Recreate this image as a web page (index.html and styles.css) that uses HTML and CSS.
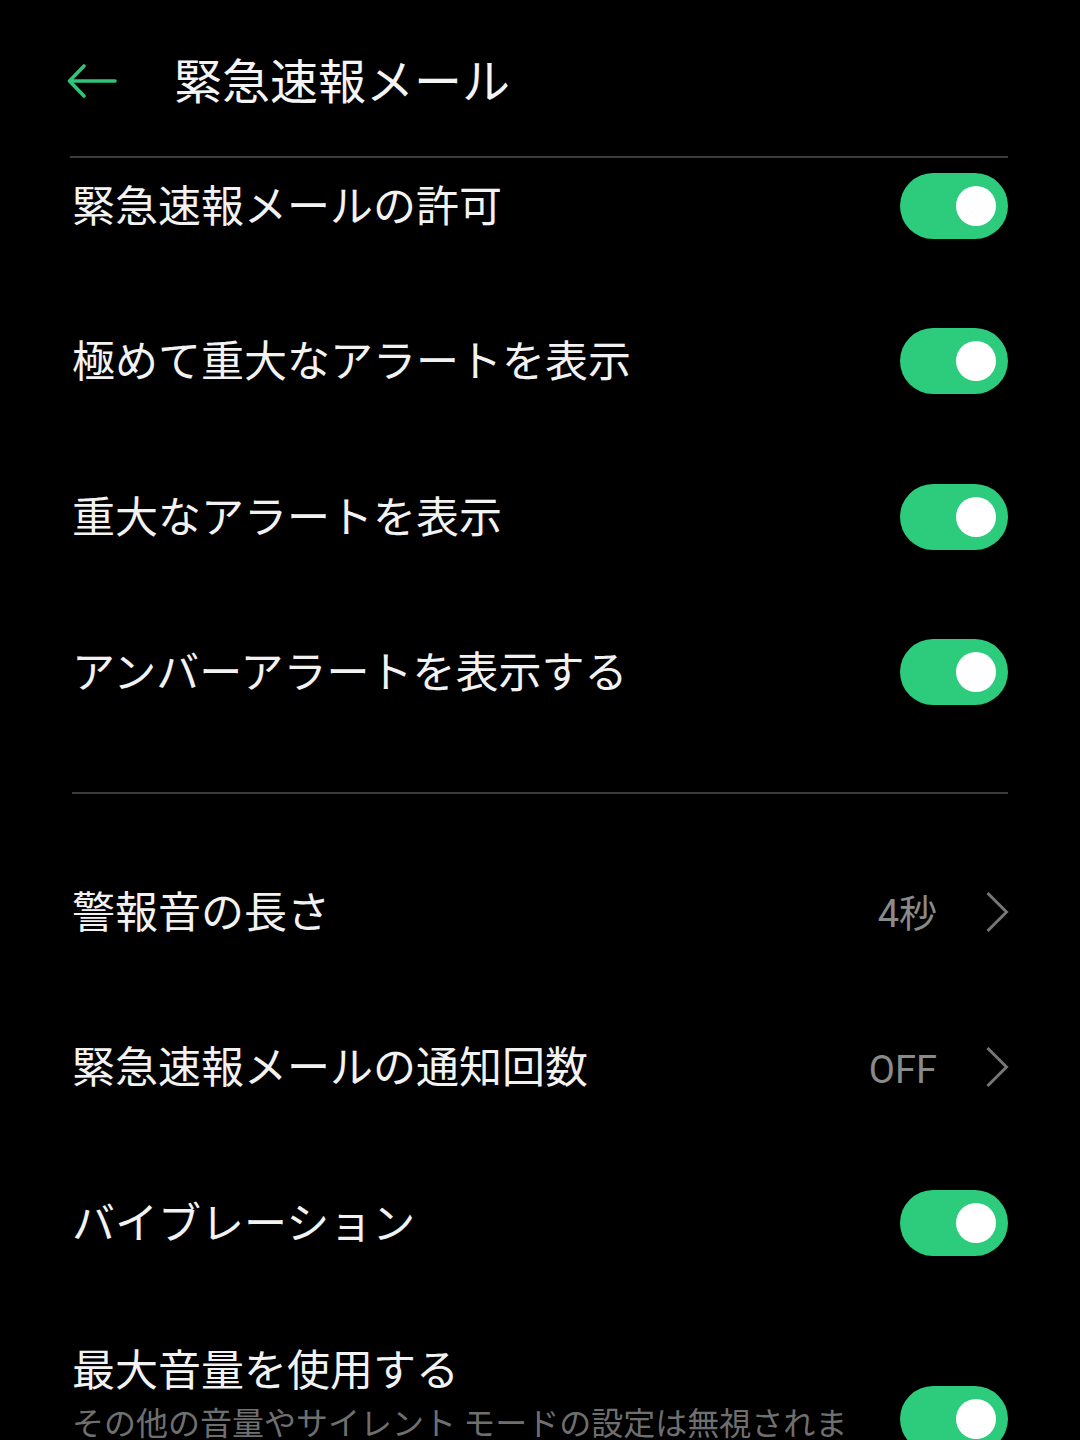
FILE: index.html
```html
<!DOCTYPE html>
<html lang="ja">
<head>
<meta charset="utf-8">
<link rel="stylesheet" href="styles.css">
</head>
<body>
<div class="screen">
  <header class="appbar">
    <svg class="back" width="52" height="40" viewBox="0 0 52 40" aria-hidden="true">
      <path d="M49 20 H4 M18 5 L3.5 20 L18 35" fill="none" stroke="#2fc479" stroke-width="3.6" stroke-linecap="round" stroke-linejoin="round"/>
    </svg>
    <h1 class="title">緊急速報メール</h1>
  </header>
  <div class="divider first"></div>
  <div class="viewport">
    <div class="list">
      <section class="group">
        <div class="row"><span class="label">緊急速報メールの許可</span><span class="toggle"><span class="knob"></span></span></div>
        <div class="row"><span class="label">極めて重大なアラートを表示</span><span class="toggle"><span class="knob"></span></span></div>
        <div class="row"><span class="label">重大なアラートを表示</span><span class="toggle"><span class="knob"></span></span></div>
        <div class="row"><span class="label">アンバーアラートを表示する</span><span class="toggle"><span class="knob"></span></span></div>
      </section>
      <div class="divider"></div>
      <section class="group second">
        <div class="row"><span class="label">警報音の長さ</span><span class="value">4秒</span><svg class="chev" width="24" height="42" viewBox="0 0 24 42" aria-hidden="true"><path d="M2.5 2 L21.5 21 L2.5 40" fill="none" stroke="#767676" stroke-width="3"/></svg></div>
        <div class="row"><span class="label">緊急速報メールの通知回数</span><span class="value">OFF</span><svg class="chev" width="24" height="42" viewBox="0 0 24 42" aria-hidden="true"><path d="M2.5 2 L21.5 21 L2.5 40" fill="none" stroke="#767676" stroke-width="3"/></svg></div>
        <div class="row"><span class="label">バイブレーション</span><span class="toggle"><span class="knob"></span></span></div>
        <div class="row tall">
          <div class="textblock">
            <div class="label">最大音量を使用する</div>
            <div class="sub">その他の音量やサイレント モードの設定は無視されます。</div>
          </div>
          <span class="toggle"><span class="knob"></span></span>
        </div>
      </section>
    </div>
  </div>
</div>
</body>
</html>
```

FILE: styles.css
```css
html, body {
  margin: 0;
  padding: 0;
  background: #000;
}
body {
  width: 1080px;
  height: 1440px;
  overflow: hidden;
  font-family: "Noto Sans CJK JP", "Noto Sans", sans-serif;
  color: #f2f2f2;
}
.screen {
  display: flex;
  flex-direction: column;
  height: 1440px;
}
.appbar {
  height: 156px;
  display: flex;
  align-items: center;
  padding-left: 66px;
  box-sizing: border-box;
  flex: none;
}
.back {
  display: block;
  margin-top: 6px;
}
.title {
  margin: 0 0 0 56px;
  font-size: 48px;
  font-weight: 400;
  line-height: 1;
  letter-spacing: 0;
  color: #f4f4f4;
}
.divider {
  height: 2px;
  background: #3c3c3c;
  margin: 0 72px 0 72px;
  flex: none;
}
.divider.first {
  margin-left: 70px;
}
.viewport {
  flex: 1;
  overflow: hidden;
}
.list {
  margin-top: -30px;
}
.group {
  padding: 0 72px 0 72px;
}
.group:first-child {
  padding-bottom: 42px;
}
.group.second {
  padding-top: 40px;
}
.row {
  height: 155.5px;
  display: flex;
  align-items: center;
}
.label {
  flex: 1;
  font-size: 43px;
  line-height: 56px;
  font-weight: 400;
  white-space: nowrap;
  padding-bottom: 6px;
}
.toggle {
  flex: none;
  width: 108px;
  height: 66px;
  border-radius: 33px;
  background: #2dcb7c;
  display: flex;
  align-items: center;
  justify-content: flex-end;
  padding-right: 12px;
  box-sizing: border-box;
}
.knob {
  width: 40px;
  height: 40px;
  border-radius: 50%;
  background: #fff;
}
.value {
  flex: none;
  font-family: Roboto, "Noto Sans CJK JP", sans-serif;
  font-size: 38px;
  color: #8a8a8a;
  margin-right: 48px;
  line-height: 1;
  padding-top: 5px;
}
.chev {
  flex: none;
  display: block;
  margin-right: -1px;
}
.row.tall {
  height: auto;
  padding: 38px 0 43px;
}
.textblock {
  flex: 1;
  padding-right: 50px;
}
.textblock .label {
  padding-bottom: 0;
}
.sub {
  font-size: 32px;
  line-height: 52px;
  color: #6f6f6f;
  margin-top: 0;
}
```
